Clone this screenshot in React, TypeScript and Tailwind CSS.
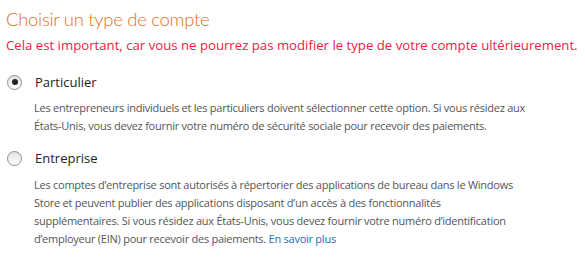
import React from "react";

function Radio({ checked }: { checked?: boolean }) {
  return (
    <span className="flex h-[15px] w-[15px] shrink-0 items-center justify-center rounded-full border border-[#8f8f8f] bg-gradient-to-b from-[#e2e2e2] to-[#ffffff]">
      {checked && <span className="h-[6px] w-[6px] rounded-full bg-[#222]" />}
    </span>
  );
}

export default function App() {
  return (
    <div className="h-[262px] w-[585px] bg-white px-[6px] pt-[7px] font-['Open_Sans',sans-serif]">
      <h1 className="font-['Lato',sans-serif] text-[18.5px] font-light leading-[24px] tracking-[-0.3px] text-[#e0701c]">
        Choisir un type de compte
      </h1>
      <p className="mt-[5px] text-[13.2px] leading-[18px] text-[#f0203e]">
        Cela est important, car vous ne pourrez pas modifier le type de votre compte ultérieurement.
      </p>

      <div className="mt-[18px] flex items-center gap-[13px] pl-[1px]">
        <Radio checked />
        <span className="text-[13px] leading-[20px] text-[#222]">Particulier</span>
      </div>
      <p className="mt-[7px] pl-[28px] text-[11px] leading-[18px] tracking-[-0.25px] text-[#555]">
        Les entrepreneurs individuels et les particuliers doivent sélectionner cette option. Si vous résidez aux
        <br />
        États-Unis, vous devez fournir votre numéro de sécurité sociale pour recevoir des paiements.
      </p>

      <div className="mt-[13px] flex items-center gap-[13px] pl-[1px]">
        <Radio />
        <span className="text-[13px] leading-[20px] text-[#222]">Entreprise</span>
      </div>
      <p className="mt-[8px] pl-[28px] text-[11px] leading-[18px] tracking-[-0.25px] text-[#555]">
        Les comptes d’entreprise sont autorisés à répertorier des applications de bureau dans le Windows
        <br />
        Store et peuvent publier des applications disposant d’un accès à des fonctionnalités
        <br />
        supplémentaires. Si vous résidez aux États-Unis, vous devez fournir votre numéro d’identification
        <br />
        d’employeur (EIN) pour recevoir des paiements. <a className="text-[#1a6fb5]">En savoir plus</a>
      </p>
    </div>
  );
}
